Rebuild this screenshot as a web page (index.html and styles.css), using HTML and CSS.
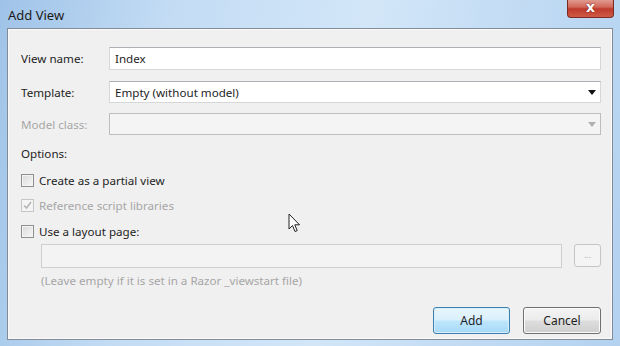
FILE: index.html
```html
<!DOCTYPE html>
<html lang="en">
<head>
  <meta charset="UTF-8" />
  <title>Add View</title>
  <link rel="stylesheet" href="styles.css">
</head>
<body>
  <div class="window">
    <div class="titlebar">
      <span class="title">Add View</span>
      <div class="close">x</div>
    </div>

    <div class="panel">
      <div class="field">
        <label>View name:</label>
        <div class="textbox">Index</div>
      </div>
      <div class="field field--combo">
        <label>Template:</label>
        <div class="combo">Empty (without model)<span class="arrow"></span></div>
      </div>
      <div class="field field--combo field--off">
        <label>Model class:</label>
        <div class="combo combo--off"><span class="arrow"></span></div>
      </div>

      <div class="options">Options:</div>

      <div class="check check--first"><span class="box"></span>Create as a partial view</div>
      <div class="check check--off">
        <span class="box box--checked">
          <svg width="9" height="9" viewBox="0 0 9 9"><path d="M1 4.5 L3.5 7 L8 1" fill="none" stroke="#b5b5b5" stroke-width="1.6"/></svg>
        </span>Reference script libraries
      </div>
      <div class="check check--last"><span class="box"></span>Use a layout page:</div>

      <div class="layout-row">
        <div class="textbox textbox--off"></div>
        <div class="browse">...</div>
      </div>
      <div class="hint">(Leave empty if it is set in a Razor _viewstart file)</div>

      <div class="buttons">
        <button class="btn btn--primary">Add</button>
        <button class="btn">Cancel</button>
      </div>
    </div>

    <svg class="cursor" width="13" height="21" viewBox="0 0 13 21">
      <path d="M1 1 L1 16 L4.5 12.5 L7 18.5 L9.2 17.6 L6.8 11.8 L11.5 11.8 Z" fill="#fff" stroke="#222" stroke-width="1" stroke-linejoin="round"/>
    </svg>
  </div>
</body>
</html>
```

FILE: styles.css
```css
body {
  margin: 0;
  font-family: 'Noto Sans', 'Open Sans', sans-serif;
  font-size: 11.6px;
  color: #1e1e1e;
}
.window {
  position: relative;
  width: 620px;
  height: 346px;
  box-sizing: border-box;
  padding: 0 7px 6px 7px;
  display: flex;
  flex-direction: column;
  background: linear-gradient(100deg, #9fc3e8 0%, #c3dcf4 25%, #d2e6f8 55%, #c0daf3 80%, #b3d2f0 100%);
}
.titlebar {
  height: 28px;
  display: flex;
  align-items: flex-start;
  justify-content: space-between;
}
.title {
  font-size: 13px;
  margin: 6px 0 0 1px;
  color: #1a1a1a;
}
.close {
  width: 47px;
  height: 19px;
  margin: -1px -1px 0 0;
  box-sizing: border-box;
  border: 1px solid #7a2a22;
  border-top: none;
  border-radius: 0 0 4px 4px;
  background: linear-gradient(#e2a296 0%, #d1665a 45%, #bf3a2c 55%, #cf5b46 100%);
  color: #fff;
  font: bold 14px 'DejaVu Sans', sans-serif;
  text-align: center;
  line-height: 16px;
  text-shadow: 0 0 2px #6b1a12;
}
.panel {
  flex: 1;
  background: #f0f0f0;
  border: 1px solid #838b96;
  box-shadow: inset 0 0 0 1px #fafafa;
  padding: 18px 11px 0 13px;
}
.field {
  display: grid;
  grid-template-columns: 88px 1fr;
  align-items: center;
  height: 23px;
  margin-bottom: 11px;
}
.field--combo {
  height: 22px;
  margin-bottom: 10px;
}
.field--off label {
  color: #a6a6a6;
}
.textbox, .combo {
  height: 100%;
  box-sizing: border-box;
  background: #fff;
  border: 1px solid #d5d7da;
  border-top-color: #adb0b5;
  padding-left: 5px;
  display: flex;
  align-items: center;
  position: relative;
}
.arrow {
  position: absolute;
  right: 4px;
  top: 8px;
  border: 4px solid transparent;
  border-top: 5px solid #111;
  border-bottom: none;
}
.combo--off {
  background: #f4f4f4;
  border-color: #bdbdbd;
}
.combo--off .arrow {
  border-top-color: #b0b0b0;
}
.options {
  line-height: 16px;
  height: 16px;
  margin-top: 11px;
}
.check {
  display: flex;
  align-items: center;
  gap: 5px;
  height: 20px;
  margin-top: 5px;
}
.check--first {
  margin-top: 8px;
}
.check--last {
  margin-top: 6px;
}
.check--off {
  color: #a6a6a6;
}
.box {
  width: 13px;
  height: 13px;
  box-sizing: border-box;
  border: 1px solid #8e8f8f;
  background: linear-gradient(135deg, #d9d9d9, #f7f7f7);
  box-shadow: inset 0 0 0 1px #f4f4f4;
  display: flex;
  align-items: center;
  justify-content: center;
}
.box--checked {
  border-color: #c6c6c6;
  background: #f4f4f4;
}
.layout-row {
  display: flex;
  gap: 12px;
  margin-top: 3px;
  padding-left: 20px;
  height: 24px;
}
.textbox--off {
  flex: 1;
  background: #f3f3f3;
  border-color: #cfcfcf;
}
.browse {
  width: 27px;
  height: 23px;
  box-sizing: border-box;
  border: 1px solid #c5c5c5;
  border-radius: 3px;
  background: #f4f4f4;
  color: #b0b0b0;
  font-size: 9px;
  text-align: center;
  line-height: 20px;
}
.hint {
  color: #a6a6a6;
  line-height: 16px;
  margin-top: 5px;
  padding-left: 20px;
}
.buttons {
  display: flex;
  justify-content: flex-end;
  gap: 13px;
  margin-top: 18px;
}
.btn {
  width: 78px;
  height: 27px;
  font: inherit;
  font-size: 12px;
  color: #1e1e1e;
  border: 1px solid #707070;
  border-radius: 3px;
  background: linear-gradient(#f4f4f4 0%, #ebebeb 48%, #dddddd 52%, #cfcfcf 100%);
  box-shadow: inset 0 0 0 1px #fbfbfb;
  padding: 0;
}
.btn--primary {
  width: 77px;
  border-color: #3c7fb1;
  background: linear-gradient(#e9f5fc 0%, #d9f0fc 48%, #bee6fd 52%, #a7d9f5 100%);
  box-shadow: inset 0 0 0 1px #d8eef9;
}
.cursor {
  position: absolute;
  left: 288px;
  top: 213px;
}
```
